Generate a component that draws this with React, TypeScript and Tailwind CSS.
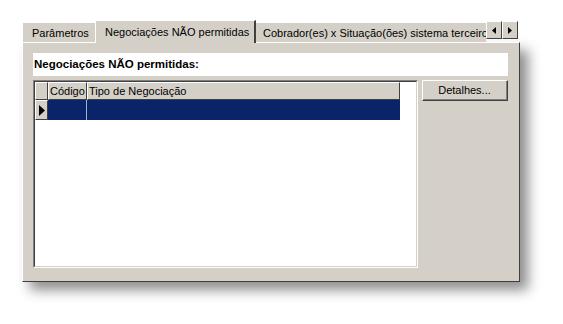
import React from 'react';

const FONT = { fontFamily: '"Liberation Sans", Arial, sans-serif' };

function ScrollButton({ dir }: { dir: 'left' | 'right' }) {
  return (
    <div className="w-[16px] h-[18px] bg-[#d4d0c8] border-t border-l border-t-white border-l-white border-r border-b border-r-[#404040] border-b-[#404040] flex items-center justify-center">
      <svg width="4" height="7" viewBox="0 0 4 7">
        {dir === 'left' ? <path d="M4 0 L0 3.5 L4 7 Z" fill="#000" /> : <path d="M0 0 L4 3.5 L0 7 Z" fill="#000" />}
      </svg>
    </div>
  );
}

export default function App() {
  return (
    <div className="w-[563px] h-[324px] bg-white pt-[20px] pl-[22px] text-[11px] text-black" style={FONT}>
      <div className="w-[498px] flex flex-col">
        {/* Tabs */}
        <div className="h-[22px] flex items-end relative z-10">
          <div className="w-[73px] h-[20px] bg-[#d4d0c8] border-t border-l border-t-white border-l-white flex items-center pl-[9px] pt-[1px]">
            Parâmetros
          </div>
          <div className="w-[161px] h-[23px] -mb-[1px] bg-[#d4d0c8] border-t border-l border-t-white border-l-white border-r-2 border-r-[#404040] flex items-start pl-[9px] pt-[3px] whitespace-nowrap">
            Negociações NÃO permitidas
          </div>
          <div className="w-[230px] h-[20px] bg-[#d4d0c8] border-t border-t-white flex items-center pl-[7px] pt-[1px] whitespace-nowrap overflow-hidden">
            Cobrador(es) x Situação(ões) sistema terceiro
          </div>
          <div className="flex self-start mt-[1px]">
            <ScrollButton dir="left" />
            <ScrollButton dir="right" />
          </div>
        </div>

        {/* Body */}
        <div className="h-[240px] bg-[#d4d0c8] border-t border-l border-t-white border-l-white border-r border-b border-r-[#404040] border-b-[#404040] shadow-[8px_8px_12px_rgba(0,0,0,0.45)] pl-[10px] pt-[10px] pr-[11px] flex flex-col gap-[4px]">
          <div className="h-[23px] bg-white flex items-center pl-[1px] font-bold whitespace-nowrap text-[11.5px]">
            Negociações NÃO permitidas:
          </div>
          <div className="flex gap-[4px]">
            {/* Grid */}
            <div className="w-[385px] h-[188px] bg-white border-t border-l border-t-[#808080] border-l-[#808080] border-r border-b border-r-white border-b-white">
              <div className="h-full border-t border-l border-t-[#404040] border-l-[#404040] border-r border-b border-r-[#d4d0c8] border-b-[#d4d0c8] flex flex-col">
                <div className="flex h-[18px] w-[365px]">
                  <div className="w-[13px] bg-[#d4d0c8] border-r border-b border-r-[#404040] border-b-[#404040] border-t border-l border-t-white border-l-white" />
                  <div className="w-[39px] bg-[#d4d0c8] border-r border-b border-r-[#404040] border-b-[#404040] border-t border-l border-t-white border-l-white pl-[1px] flex items-center">
                    Código
                  </div>
                  <div className="flex-1 bg-[#d4d0c8] border-r border-b border-r-[#404040] border-b-[#404040] border-t border-l border-t-white border-l-white pl-[1px] flex items-center whitespace-nowrap">
                    Tipo de Negociação
                  </div>
                </div>
                <div className="flex h-[20px] w-[365px]">
                  <div className="w-[13px] bg-[#d4d0c8] border-r border-b border-r-[#404040] border-b-[#404040] border-t border-l border-t-white border-l-white flex items-center justify-center">
                    <svg width="6" height="11" viewBox="0 0 6 11">
                      <path d="M0 0 L6 5.5 L0 11 Z" fill="#000" />
                    </svg>
                  </div>
                  <div className="w-[39px] bg-[#0a246a] border-r border-r-[#a6b0cc]" />
                  <div className="flex-1 bg-[#0a246a]" />
                </div>
              </div>
            </div>
            {/* Detalhes button */}
            <div className="w-[86px] h-[21px] bg-[#d4d0c8] border-t border-l border-t-white border-l-white border-r border-b border-r-[#404040] border-b-[#404040] flex items-center justify-center">
              <div className="w-full h-full border-r border-b border-r-[#808080] border-b-[#808080] flex items-center justify-center">
                Detalhes...
              </div>
            </div>
          </div>
        </div>
      </div>
    </div>
  );
}
